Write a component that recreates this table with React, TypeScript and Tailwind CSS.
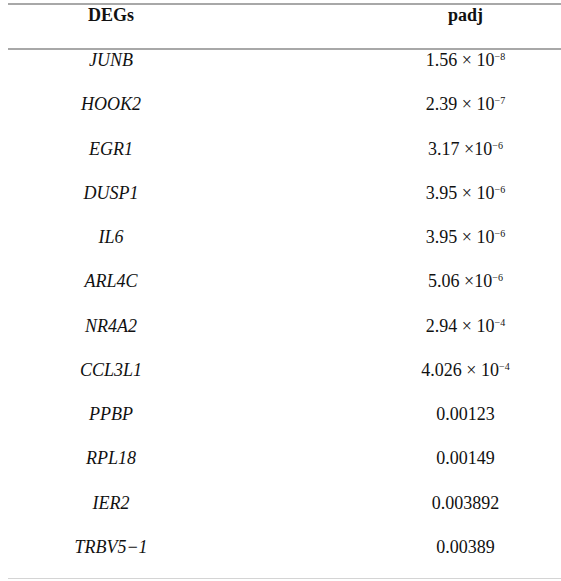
import React from 'react';

const rows: { gene: string; value: React.ReactNode }[] = [
  { gene: 'JUNB', value: <>1.56 × 10<sup>−8</sup></> },
  { gene: 'HOOK2', value: <>2.39 × 10<sup>−7</sup></> },
  { gene: 'EGR1', value: <>3.17 ×10<sup>−6</sup></> },
  { gene: 'DUSP1', value: <>3.95 × 10<sup>−6</sup></> },
  { gene: 'IL6', value: <>3.95 × 10<sup>−6</sup></> },
  { gene: 'ARL4C', value: <>5.06 ×10<sup>−6</sup></> },
  { gene: 'NR4A2', value: <>2.94 × 10<sup>−4</sup></> },
  { gene: 'CCL3L1', value: <>4.026 × 10<sup>−4</sup></> },
  { gene: 'PPBP', value: '0.00123' },
  { gene: 'RPL18', value: '0.00149' },
  { gene: 'IER2', value: '0.003892' },
  { gene: 'TRBV5−1', value: '0.00389' },
];

const App = () => {
  return (
    <div className="h-[581px] w-full overflow-hidden bg-white pl-2 pt-[3px] font-['Liberation_Serif',serif] text-[18px] leading-[18px] text-[#111]">
      <div className="border-t-2 border-b-2 border-[#a8a8a8]">
        <div className="grid h-[43px] grid-cols-[206px_1fr] pt-px font-bold">
          <div className="text-center">DEGs</div>
          <div className="pl-[156px] text-center">padj</div>
        </div>
      </div>
      <div className="border-b border-[#d4d4d4]">
        {rows.map((r, i) => (
          <div
            key={r.gene}
            className={`grid grid-cols-[206px_1fr] pt-px ${
              i === rows.length - 1 ? 'h-[41px]' : 'h-[44.27px]'
            }`}
          >
            <div className="text-center italic">{r.gene}</div>
            <div className="pl-[156px] text-center [&_sup]:text-[10px] [&_sup]:top-[-0.6em]">
              {r.value}
            </div>
          </div>
        ))}
      </div>
    </div>
  );
};

export default App;
